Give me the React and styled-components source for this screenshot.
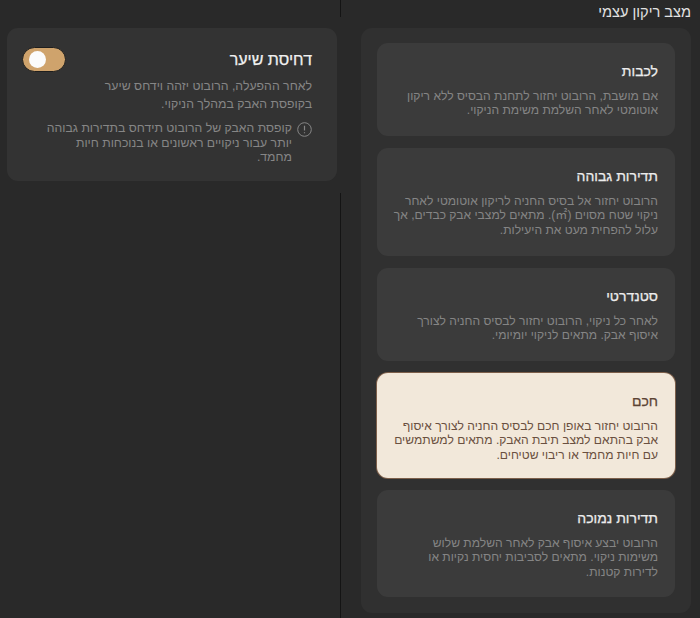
import React from 'react';
import styled, { createGlobalStyle } from 'styled-components';

const GlobalStyle = createGlobalStyle`
  html, body {
    margin: 0;
    padding: 0;
    background: #292929;
  }
  * {
    box-sizing: border-box;
  }
`;

const Page = styled.div`
  width: 700px;
  height: 618px;
  display: flex;
  overflow: hidden;
  direction: ltr;
  background: #292929;
  font-family: 'Liberation Sans', 'Noto Sans CJK SC', Arial, sans-serif;
`;

const LeftColumn = styled.div`
  width: 340px;
  height: 100%;
  padding: 28px 3px 0 7px;
`;

const Divider = styled.div`
  width: 1px;
  height: 100%;
  display: flex;
  flex-direction: column;
  justify-content: space-between;
`;

const DividerPiece = styled.span`
  display: block;
  height: ${(props) => props.$height}px;
  background: #141414;
`;

const RightColumn = styled.div`
  width: 359px;
  height: 100%;
  padding: 0 9px 0 20px;
  display: flex;
  flex-direction: column;
`;

const Heading = styled.h1`
  height: 28px;
  margin: 0;
  padding-top: 4px;
  direction: rtl;
  font-size: 14.6px;
  line-height: 16px;
  font-weight: 400;
  white-space: nowrap;
  color: #e2e2e2;
`;

const Panel = styled.div`
  width: 330px;
  height: 585px;
  padding: 15px 16px;
  border-radius: 11px;
  background: #303030;
  display: flex;
  flex-direction: column;
  gap: 12px;
`;

const ModeCard = styled.div`
  height: ${(props) => props.$height}px;
  padding: 20px 17px 0;
  direction: rtl;
  border-radius: 11px;
  background: ${(props) => (props.$active ? '#f2e8da' : '#3b3b3b')};
  box-shadow: ${(props) => (props.$active ? '0 0 0 1px #7d5f4a' : 'none')};
`;

const ModeTitle = styled.h2`
  margin: 0 0 9px;
  font-size: 14px;
  line-height: 17px;
  font-weight: 400;
  -webkit-text-stroke: 0.25px currentColor;
  color: ${(props) => (props.$active ? '#5c4333' : '#ececec')};
`;

const ModeText = styled.p`
  margin: 0;
  font-size: 12.1px;
  line-height: 14.3px;
  white-space: nowrap;
  color: ${(props) => (props.$active ? '#6a5040' : '#858585')};
`;

const HairCard = styled.div`
  width: 330px;
  height: 153px;
  padding: 20px 25px 0 15px;
  border-radius: 11px;
  background: #333333;
  direction: rtl;
`;

const HairHeader = styled.div`
  display: flex;
  justify-content: space-between;
  align-items: flex-start;
`;

const HairTitle = styled.h2`
  margin: 2px 0 0;
  font-size: 16px;
  line-height: 19px;
  font-weight: 400;
  -webkit-text-stroke: 0.25px currentColor;
  color: #f0f0f0;
`;

const Toggle = styled.div`
  width: 44px;
  height: 25px;
  margin-top: -1px;
  padding: 3px 6px;
  border-radius: 13px;
  background: #cfa36c;
  border: 1px solid #1e1e1e;
  display: flex;
  justify-content: flex-start;
  direction: ltr;
`;

const Knob = styled.span`
  width: 17px;
  height: 17px;
  border-radius: 50%;
  background: #fbfbfb;
`;

const HairText = styled.p`
  margin: 6px 0 0;
  font-size: 12.3px;
  line-height: 17.5px;
  white-space: nowrap;
  color: #868686;
`;

const Note = styled.div`
  margin-top: 8px;
  display: flex;
  gap: 5px;
  align-items: flex-start;
`;

const NoteIcon = styled.svg`
  width: 15px;
  height: 15px;
  flex: none;
  margin-top: 1px;
`;

const NoteText = styled.p`
  margin: 0;
  font-size: 12.25px;
  line-height: 14.5px;
  white-space: nowrap;
  color: #868686;
`;

const modes = [
  {
    title: 'לכבות',
    height: 93,
    lines: ['אם מושבת, הרובוט יחזור לתחנת הבסיס ללא ריקון', 'אוטומטי לאחר השלמת משימת הניקוי.'],
  },
  {
    title: 'תדירות גבוהה',
    height: 108,
    lines: [
      'הרובוט יחזור אל בסיס החניה לריקון אוטומטי לאחר',
      'ניקוי שטח מסוים (㎡). מתאים למצבי אבק כבדים, אך',
      'עלול להפחית מעט את היעילות.',
    ],
  },
  {
    title: 'סטנדרטי',
    height: 93,
    lines: ['לאחר כל ניקוי, הרובוט יחזור לבסיס החניה לצורך', 'איסוף אבק. מתאים לניקוי יומיומי.'],
  },
  {
    title: 'חכם',
    height: 105,
    active: true,
    lines: [
      'הרובוט יחזור באופן חכם לבסיס החניה לצורך איסוף',
      'אבק בהתאם למצב תיבת האבק. מתאים למשתמשים',
      'עם חיות מחמד או ריבוי שטיחים.',
    ],
  },
  {
    title: 'תדירות נמוכה',
    height: 107,
    lines: [
      'הרובוט יבצע איסוף אבק לאחר השלמת שלוש',
      'משימות ניקוי. מתאים לסביבות יחסית נקיות או',
      'לדירות קטנות.',
    ],
  },
];

const withBreaks = (lines) =>
  lines.map((line, i) => (
    <React.Fragment key={i}>
      {line}
      {i < lines.length - 1 && <br />}
    </React.Fragment>
  ));

const App = () => {
  return (
    <Page>
      <GlobalStyle />
      <LeftColumn>
        <HairCard>
          <HairHeader>
            <HairTitle>דחיסת שיער</HairTitle>
            <Toggle>
              <Knob />
            </Toggle>
          </HairHeader>
          <HairText>
            לאחר ההפעלה, הרובוט יזהה וידחס שיער
            <br />
            בקופסת האבק במהלך הניקוי.
          </HairText>
          <Note>
            <NoteIcon viewBox="0 0 15 15" fill="none" stroke="#868686">
              <circle cx="7.5" cy="7.5" r="6.8" strokeWidth="1" />
              <path d="M7.5 3.8v4.6M7.5 10.2v1.1" strokeWidth="1.2" />
            </NoteIcon>
            <NoteText>
              קופסת האבק של הרובוט תידחס בתדירות גבוהה
              <br />
              יותר עבור ניקויים ראשונים או בנוכחות חיות
              <br />
              מחמד.
            </NoteText>
          </Note>
        </HairCard>
      </LeftColumn>
      <Divider>
        <DividerPiece $height={17} />
        <DividerPiece $height={425} />
      </Divider>
      <RightColumn>
        <Heading>מצב ריקון עצמי</Heading>
        <Panel>
          {modes.map((mode) => (
            <ModeCard key={mode.title} $height={mode.height} $active={mode.active}>
              <ModeTitle $active={mode.active}>{mode.title}</ModeTitle>
              <ModeText $active={mode.active}>{withBreaks(mode.lines)}</ModeText>
            </ModeCard>
          ))}
        </Panel>
      </RightColumn>
    </Page>
  );
};

export default App;
